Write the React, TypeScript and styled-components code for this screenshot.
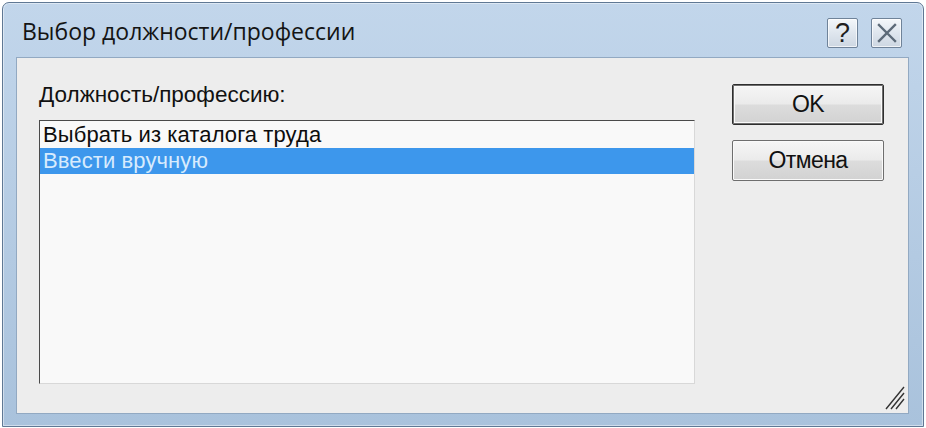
import { FC } from 'react';
import styled, { createGlobalStyle } from 'styled-components';

const GlobalStyle = createGlobalStyle`
  html, body {
    margin: 0;
    padding: 0;
    background: #ffffff;
  }
  body {
    font-family: 'Liberation Sans', Arial, sans-serif;
  }
`;

const items = ['Выбрать из каталога труда', 'Ввести вручную'];
const selected = 1;

const App: FC = () => (
  <>
    <GlobalStyle />
    <Screen>
      <Window>
        <TitleBar>
          <Title>Выбор должности/профессии</Title>
          <CaptionButtons>
            <CaptionButton>?</CaptionButton>
            <CaptionButton>
              <svg width="22" height="20" viewBox="0 0 22 20">
                <path
                  d="M3 2 L19 18 M19 2 L3 18"
                  stroke="#5c6a78"
                  strokeWidth="2.4"
                  strokeLinecap="square"
                />
              </svg>
            </CaptionButton>
          </CaptionButtons>
        </TitleBar>
        <Client>
          <Main>
            <Label>Должность/профессию:</Label>
            <ListBox>
              {items.map((item, i) => (
                <ListItem key={item} $selected={i === selected}>
                  {item}
                </ListItem>
              ))}
            </ListBox>
          </Main>
          <Side>
            <Button $default>OK</Button>
            <Button>Отмена</Button>
          </Side>
          <Grip>
            <svg width="22" height="26" viewBox="0 0 22 26">
              <path
                d="M2 24 L20 2 M7 24 L20 8 M12 24 L20 14"
                stroke="#333333"
                strokeWidth="1.4"
              />
            </svg>
          </Grip>
        </Client>
      </Window>
    </Screen>
  </>
);

const Screen = styled.div`
  width: 926px;
  height: 428px;
  padding: 2px 0 0 2px;
  box-sizing: border-box;
`;

const Window = styled.div`
  display: flex;
  flex-direction: column;
  width: 922px;
  height: 425px;
  box-sizing: border-box;
  border: 1px solid #5f7894;
  border-radius: 7px 7px 0 0;
  background: linear-gradient(180deg, #c2d6eb 0%, #a9c2dc 100%);
  box-shadow: inset 0 0 0 1px rgba(255, 255, 255, 0.45);
  padding: 0 14px 12px 13px;
`;

const TitleBar = styled.div`
  display: flex;
  align-items: center;
  justify-content: space-between;
  height: 54px;
  flex-shrink: 0;
`;

const Title = styled.div`
  font-family: 'Open Sans', 'Noto Sans', sans-serif;
  font-size: 23px;
  color: #141414;
  padding-left: 6px;
  padding-top: 2px;
`;

const CaptionButtons = styled.div`
  display: flex;
  gap: 13px;
  align-self: flex-start;
  margin-top: 15px;
  margin-right: 7px;
`;

const CaptionButton = styled.div`
  display: flex;
  align-items: center;
  justify-content: center;
  width: 31px;
  height: 30px;
  box-sizing: border-box;
  border: 1px solid #6f8399;
  border-radius: 2px;
  background: linear-gradient(180deg, #f4f7fa 0%, #dfe6ee 50%, #cdd7e2 100%);
  box-shadow: inset 0 0 0 1px rgba(255, 255, 255, 0.7);
  font-family: 'Liberation Sans', Arial, sans-serif;
  font-size: 27px;
  color: #1e1e1e;
  line-height: 1;
`;

const Client = styled.div`
  position: relative;
  flex: 1;
  display: flex;
  background: #ededed;
  border: 1px solid #92a9c2;
  padding: 0 24px 0 22px;
`;

const Main = styled.div`
  display: flex;
  flex-direction: column;
  width: 656px;
  padding-top: 24px;
`;

const Label = styled.div`
  font-size: 22.5px;
  color: #111111;
  height: 38px;
`;

const ListBox = styled.div`
  width: 656px;
  height: 264px;
  box-sizing: border-box;
  background: #f9f9f9;
  border-top: 1px solid #4a4a4a;
  border-left: 1px solid #4a4a4a;
  border-right: 1px solid #d8d8d8;
  border-bottom: 1px solid #d8d8d8;
  padding-top: 1px;
`;

const ListItem = styled.div<{ $selected?: boolean }>`
  height: 26px;
  line-height: 26px;
  padding-left: 3px;
  font-size: 22px;
  letter-spacing: 0.1px;
  color: ${({ $selected }) => ($selected ? '#d7ebfd' : '#0d0d0d')};
  background: ${({ $selected }) => ($selected ? '#3d97ec' : 'transparent')};
`;

const Side = styled.div`
  display: flex;
  flex-direction: column;
  gap: 15px;
  margin-left: 37px;
  padding-top: 26px;
`;

const Button = styled.div<{ $default?: boolean }>`
  display: flex;
  align-items: center;
  justify-content: center;
  width: 152px;
  height: 41px;
  box-sizing: border-box;
  border: 1px solid ${({ $default }) => ($default ? '#2e2e2e' : '#6e6e6e')};
  border-radius: 2px;
  background: linear-gradient(180deg, #f6f6f6 0%, #ebebeb 48%, #dcdcdc 52%, #d2d2d2 100%);
  box-shadow: ${({ $default }) =>
    $default ? 'inset 0 0 0 1px #6e6e6e, inset 0 0 0 2px #fafafa' : 'inset 0 0 0 1px #fafafa'};
  font-size: 23px;
  letter-spacing: -0.6px;
  color: #111111;
`;

const Grip = styled.div`
  position: absolute;
  right: 2px;
  bottom: 2px;
  line-height: 0;
`;

export default App;
